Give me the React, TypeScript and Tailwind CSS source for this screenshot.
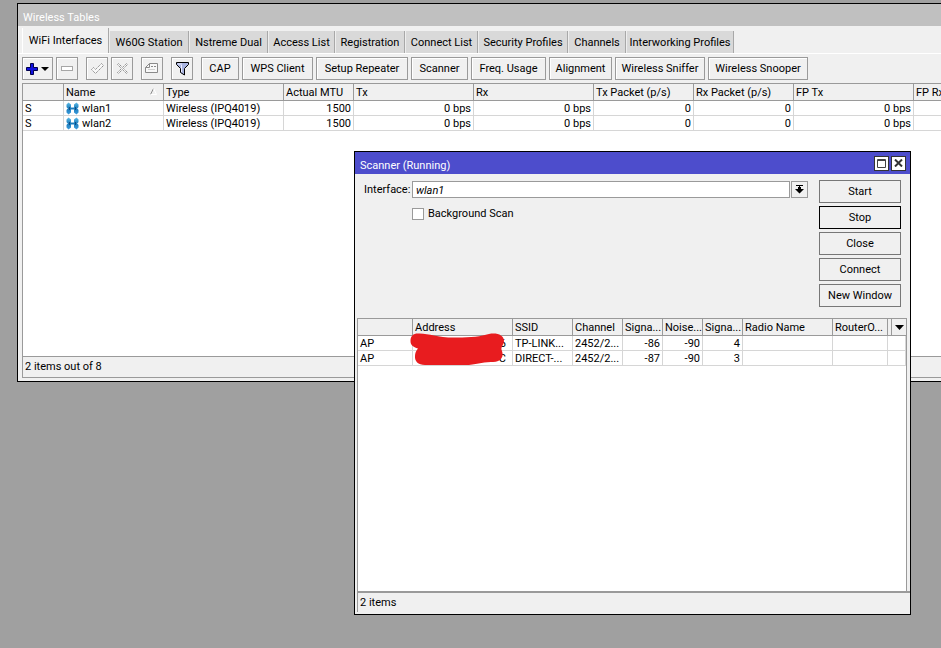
import clsx from 'clsx';
import type { ReactNode } from 'react';

const tabs = [
  { label: 'WiFi Interfaces', width: 'w-[87px]' },
  { label: 'W60G Station', width: 'w-20' },
  { label: 'Nstreme Dual', width: 'w-[79px]' },
  { label: 'Access List', width: 'w-[67px]' },
  { label: 'Registration', width: 'w-[70px]' },
  { label: 'Connect List', width: 'w-[73px]' },
  { label: 'Security Profiles', width: 'w-[90px]' },
  { label: 'Channels', width: 'w-[58px]' },
  { label: 'Interworking Profiles', width: 'w-[108px]' },
];

const tools = [
  { label: 'CAP', width: 'w-[38px]' },
  { label: 'WPS Client', width: 'w-[71px]' },
  { label: 'Setup Repeater', width: 'w-[92px]' },
  { label: 'Scanner', width: 'w-[57px]' },
  { label: 'Freq. Usage', width: 'w-[75px]' },
  { label: 'Alignment', width: 'w-[63px]' },
  { label: 'Wireless Sniffer', width: 'w-[90px]' },
  { label: 'Wireless Snooper', width: 'w-[100px]' },
];

const ifaceCols = [
  { label: '', width: 'w-[41px]' },
  { label: 'Name', width: 'w-[100px]' },
  { label: 'Type', width: 'w-[120px]' },
  { label: 'Actual MTU', width: 'w-[70px]' },
  { label: 'Tx', width: 'w-[120px]' },
  { label: 'Rx', width: 'w-[120px]' },
  { label: 'Tx Packet (p/s)', width: 'w-[100px]' },
  { label: 'Rx Packet (p/s)', width: 'w-[100px]' },
  { label: 'FP Tx', width: 'w-[120px]' },
  { label: 'FP Rx', width: 'w-[120px]' },
];

const ifaces = [
  ['S', 'wlan1', 'Wireless (IPQ4019)', '1500', '0 bps', '0 bps', '0', '0', '0 bps', ''],
  ['S', 'wlan2', 'Wireless (IPQ4019)', '1500', '0 bps', '0 bps', '0', '0', '0 bps', ''],
];

const scanCols = [
  { label: '', width: 'w-[55px]' },
  { label: 'Address', width: 'w-[100px]' },
  { label: 'SSID', width: 'w-[60px]' },
  { label: 'Channel', width: 'w-[50px]' },
  { label: 'Signa...', width: 'w-10' },
  { label: 'Noise...', width: 'w-10' },
  { label: 'Signa...', width: 'w-10' },
  { label: 'Radio Name', width: 'w-[90px]' },
  { label: 'RouterO...', width: 'w-[55px]' },
];

const scanRows = [
  ['AP', '6', 'TP-LINK...', '2452/2...', '-86', '-90', '4', '', ''],
  ['AP', 'C', 'DIRECT-...', '2452/2...', '-87', '-90', '3', '', ''],
];

const scanActions = ['Start', 'Stop', 'Close', 'Connect', 'New Window'];

const th = 'h-[18px] border-y border-r border-[#9a9a9a] bg-[#f0f0f0] px-[2px] text-left font-normal whitespace-nowrap';
const td = 'h-[15px] overflow-hidden border-b border-r border-[#d6d6d6] px-[2px] pt-px leading-[13px] whitespace-nowrap';

function ToolButton({ label, width, children }: { label?: string; width: string; children: ReactNode }) {
  return (
    <button
      aria-label={label}
      className={clsx('flex h-[23px] shrink-0 items-center justify-center border border-[#9a9a9a] bg-[#f0f0f0] whitespace-nowrap shadow-[inset_1px_1px_0_#fff]', width)}
    >
      {children}
    </button>
  );
}

function WlanIcon() {
  return (
    <svg width="13" height="13" viewBox="0 0 13 13" className="shrink-0">
      <defs>
        <linearGradient id="wlan" x1="0" y1="0" x2="0" y2="1">
          <stop offset="0" stopColor="#5cbbe6" />
          <stop offset="0.5" stopColor="#1c7cbc" />
          <stop offset="1" stopColor="#3c9cdc" />
        </linearGradient>
      </defs>
      <path d="M2.5 0.5 L5 2.5 V5.5 H8 V2.5 L10.5 0.5 L12.5 2.5 V10.5 L10.5 12.5 L8 10.5 V7.5 H5 V10.5 L2.5 12.5 L0.5 10.5 V2.5 Z" fill="url(#wlan)" />
      <path d="M0 5 L2 6.5 L0 8 Z M13 5 L11 6.5 L13 8 Z" fill="#fff" />
      <path d="M3.5 5 V8 M9.5 5 V8" stroke="#0d4f88" />
    </svg>
  );
}

function Toolbar() {
  return (
    <div className="flex pt-[3px] pb-[3px] pl-[4px]">
      <div className="flex gap-[3px]">
        <ToolButton label="Add" width="w-[31px]">
          <svg width="23" height="13" viewBox="0 0 23 13">
            <path d="M4.5 1.5 H7.5 V5.5 H11.5 V8.5 H7.5 V12.5 H4.5 V8.5 H0.5 V5.5 H4.5 Z" fill="#1010e0" stroke="#00004a" />
            <path d="M15 5 H23 L19 9 Z" fill="#000" />
          </svg>
        </ToolButton>
        <ToolButton label="Remove" width="w-[22px]">
          <svg width="13" height="5" viewBox="0 0 13 5">
            <rect x="0.5" y="0.5" width="11" height="4" fill="#fff" stroke="#a6a6a6" />
          </svg>
        </ToolButton>
      </div>
      <div className="ml-2 flex gap-[3px]">
        <ToolButton label="Enable" width="w-[22px]">
          <svg width="13" height="12" viewBox="0 0 13 12">
            <path d="M0.5 6.5 L2.5 4.5 L4.5 6.5 L10.5 0.5 L12.5 2.5 L4.5 10.5 Z" fill="#f8f8f8" stroke="#8a8a8a" strokeDasharray="1.5 0.7" />
          </svg>
        </ToolButton>
        <ToolButton label="Disable" width="w-[22px]">
          <svg width="13" height="13" viewBox="0 0 13 13">
            <path d="M2.5 1.5 L6.5 5.5 L10.5 1.5 L11.5 2.5 L7.5 6.5 L11.5 10.5 L10.5 11.5 L6.5 7.5 L2.5 11.5 L1.5 10.5 L5.5 6.5 L1.5 2.5 Z" fill="#f8f8f8" stroke="#8a8a8a" strokeDasharray="1.5 0.7" />
          </svg>
        </ToolButton>
      </div>
      <div className="ml-2 flex gap-2">
        <ToolButton label="Comment" width="w-[22px]">
          <svg width="14" height="11" viewBox="0 0 14 11">
            <path d="M4.5 0.5 H12.5 V9.5 H0.5 V4.5 Z M4.5 0.5 V4.5 H0.5" fill="#f8f8f8" stroke="#8a8a8a" />
            <path d="M6 3.5 H11" stroke="#8a8a8a" strokeDasharray="2 1" />
            <path d="M3 6.5 H10" stroke="#d0d0d0" />
          </svg>
        </ToolButton>
        <ToolButton label="Filter" width="w-[22px]">
          <svg width="13" height="14" viewBox="0 0 13 14">
            <path d="M0.5 0.5 H12.5 V2.5 L8.5 6.5 V13 L4.5 10.5 V6.5 L0.5 2.5 Z" fill="#a9b4e0" stroke="#000" />
            <path d="M2 2 H6 M5.5 3 V10" stroke="#eef" />
          </svg>
        </ToolButton>
      </div>
      <div className="ml-2 flex gap-[3px]">
        {tools.map(t => (
          <ToolButton key={t.label} width={t.width}><span className="pt-px">{t.label}</span></ToolButton>
        ))}
      </div>
    </div>
  );
}

function WirelessWindow() {
  return (
    <section className="ml-[17px] flex h-[379px] flex-col overflow-hidden border-y border-l border-black bg-[#f0f0f0]">
      <h1 className="h-[22px] shrink-0 bg-[#c0c0c0] pt-1 pl-[5px] leading-[19px] text-white">Wireless Tables</h1>

      <div role="tablist" className="flex h-7 shrink-0 items-end border-b border-white pl-[4px]">
        {tabs.map((t, i) => (
          <button
            key={t.label}
            role="tab"
            aria-selected={i === 0}
            className={clsx(
              'shrink-0 border-r border-[#a8a8a8] whitespace-nowrap',
              t.width,
              i === 0 ? 'h-[25px] border-l border-l-white bg-[#f0f0f0]' : 'h-[22px] border-l border-l-[#eeeeee] bg-[#d9d9d9] pt-[2px]'
            )}
          >
            {t.label}
          </button>
        ))}
      </div>

      <Toolbar />

      <div className="ml-[4px] flex-1 overflow-hidden border-l border-[#9a9a9a] bg-white">
        <table className="w-[1011px] table-fixed border-separate border-spacing-0">
          <thead>
            <tr>
              {ifaceCols.map(c => (
                <th key={c.label} className={clsx(th, 'pt-px', c.width)}>
                  {c.label === 'Name' ? (
                    <div className="flex items-center justify-between pr-1">
                      Name
                      <svg width="7" height="9" viewBox="0 0 7 9">
                        <path d="M3.5 0.5 L0.5 6.5" stroke="#8a8a8a" />
                        <path d="M3.5 0.5 L6.5 6.5 H0.5" stroke="#fff" fill="none" />
                      </svg>
                    </div>
                  ) : c.label}
                </th>
              ))}
            </tr>
          </thead>
          <tbody>
            {ifaces.map(row => (
              <tr key={row[1]}>
                {row.map((cell, i) => (
                  <td key={i} className={clsx(td, i > 2 && 'text-right')}>
                    {i === 1 ? <div className="flex h-[13px] items-center gap-[3px]"><WlanIcon />{cell}</div> : cell}
                  </td>
                ))}
              </tr>
            ))}
          </tbody>
        </table>
      </div>

      <footer className="mb-[3px] ml-[4px] h-[22px] shrink-0 border-y border-l border-[#9a9a9a] pl-[2px] leading-[19px]">2 items out of 8</footer>
    </section>
  );
}

function ScannerDialog() {
  return (
    <section className="absolute top-[151px] left-[354px] flex h-[464px] w-[557px] flex-col border border-black bg-[#f0f0f0]">
      <header className="flex h-[22px] shrink-0 items-center gap-[2px] bg-[#4d4dcc] pr-1 pl-[5px]">
        <h2 className="flex-1 pt-[5px] text-white">Scanner (Running)</h2>
        <button aria-label="Maximize" className="flex size-[15px] items-center justify-center border border-[#333] bg-white">
          <svg width="9" height="9" viewBox="0 0 9 9">
            <path d="M0.5 0.5 H8.5 V8.5 H0.5 Z M0.5 1.5 H8.5" fill="none" stroke="#444" />
          </svg>
        </button>
        <button aria-label="Close window" className="flex size-[15px] items-center justify-center border border-[#333] bg-white">
          <svg width="9" height="8" viewBox="0 0 9 8">
            <path d="M1 0.5 L8 7.5 M8 0.5 L1 7.5" stroke="#333" strokeWidth="2" />
          </svg>
        </button>
      </header>

      <div className="flex gap-[11px] px-[9px] pt-[6px]">
        <div className="flex-1">
          <div className="flex items-center pt-px">
            <label htmlFor="iface" className="w-12 shrink-0 pt-px pr-1 text-right">Interface:</label>
            <input id="iface" defaultValue="wlan1" className="h-[17px] min-w-0 flex-1 border border-[#9a9a9a] bg-white px-[3px] pt-px italic outline-none" />
            <button aria-label="Choose interface" className="ml-px flex h-[17px] w-[17px] items-center justify-center border border-[#9a9a9a]">
              <svg width="9" height="9" viewBox="0 0 9 9">
                <path d="M1 0.5 H8 M4.5 1 V5" stroke="#000" />
                <path d="M3 2 H6 V4 H9 L4.5 8.5 L0 4 H3 Z" fill="#000" />
              </svg>
            </button>
          </div>
          <label className="mt-2 ml-12 flex items-center gap-1">
            <input type="checkbox" className="size-3 appearance-none border border-[#9a9a9a] bg-white" />
            <span className="pt-px">Background Scan</span>
          </label>
        </div>
        <div className="flex w-[82px] flex-col gap-[3px]">
          {scanActions.map(a => (
            <button key={a} className={clsx('h-[23px] border pt-px', a === 'Stop' ? 'border-black' : 'border-[#777]')}>{a}</button>
          ))}
        </div>
      </div>

      <div className="relative mt-[11px] mr-[3px] ml-[2px] flex-1 border-x border-[#9a9a9a] bg-white">
        <table className="w-full table-fixed border-separate border-spacing-0">
          <thead>
            <tr>
              {scanCols.map((c, i) => (
                <th key={i} className={clsx(th, 'pt-px', c.width)}>{c.label}</th>
              ))}
              <th className={clsx(th, 'border-r-0 pr-0')}>
                <button aria-label="Columns" className="ml-px flex h-4 w-full items-center justify-center border-l border-[#9a9a9a]">
                  <svg width="9" height="5" viewBox="0 0 9 5"><path d="M0 0 H9 L4.5 5 Z" /></svg>
                </button>
              </th>
            </tr>
          </thead>
          <tbody>
            {scanRows.map((row, r) => (
              <tr key={r}>
                {row.map((cell, i) => (
                  <td key={i} className={clsx(td, i > 3 && 'text-right', i === 1 && 'pr-[6px] text-right')}>{cell}</td>
                ))}
                <td className={td} />
              </tr>
            ))}
          </tbody>
        </table>
        {/* addresses are scribbled out */}
        <svg className="absolute top-[14px] left-[51px]" width="97" height="35" viewBox="0 0 97 35">
          <path
            d="M9 1.5 C20 1 28 6 48 5.5 C62 5.5 72 4.5 80 2 C88 0.5 95 3 95 9 C95 13 91 15 93 19 C95 25 92 29.5 84 30 C73 29.5 68 33 56 33 H16 C9 33 5.5 29 6 24 C6 21 7 19 9 16.5 C4 15 1.5 13 1.5 9 C1.5 4 4 1.5 9 1.5 Z"
            fill="#e81c1f"
          />
        </svg>
      </div>

      <footer className="mb-[2px] ml-[2px] h-[21px] shrink-0 border-t-2 border-l border-[#9a9a9a] pl-[2px] leading-[19px]">2 items</footer>
    </section>
  );
}

export default function App() {
  return (
    <main className="relative min-h-screen overflow-hidden bg-[#a0a0a0] pt-[3px] font-[Roboto,Arial,sans-serif] text-[11px] leading-[14px] text-black">
      <WirelessWindow />
      <ScannerDialog />
    </main>
  );
}
